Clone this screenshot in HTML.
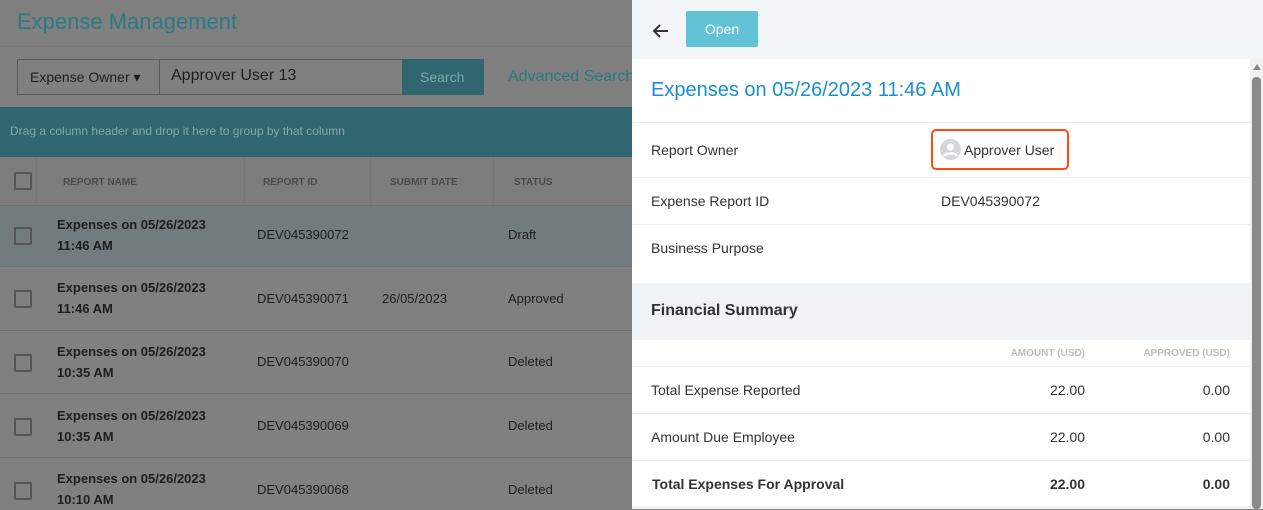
<!DOCTYPE html>
<html><head><style>
*{box-sizing:border-box;margin:0;padding:0}
body{width:1263px;height:509px;overflow:hidden;font-family:"Liberation Sans",sans-serif;background:#808080;position:relative}
.a{position:absolute}
.left{left:0;top:0;width:632px;height:509px;background:#808080}
.cb{position:absolute;width:18px;height:18px;border:2px solid #555;border-radius:2px;left:14px}
.hd{font-size:10px;font-weight:bold;color:#4a4a4a;position:absolute;top:177px}
.rn{position:absolute;left:57px;font-size:13px;font-weight:bold;color:#1e1e1e;line-height:21px}
.ri{position:absolute;left:257px;font-size:13px;color:#1e1e1e}
.rl{position:absolute;left:0;width:632px;height:1px;background:#707070}
.right{left:632px;top:0;width:631px;height:509px;background:#fff}
.lab{position:absolute;left:651px;font-size:14px;color:#333}
.hl{position:absolute;left:632px;width:618px;height:1px;background:#eceff2}
.num{position:absolute;font-size:14px;color:#333;text-align:right;width:100px}
</style></head><body>
<div class="a left">
 <div class="a" style="left:17px;top:9px;font-size:22px;color:#2a7a85">Expense Management</div>
 <div class="a" style="left:0;top:46px;width:632px;height:1px;background:#7a7a7a"></div>
 <div class="a" style="left:17px;top:59px;width:467px;height:36px;border:1px solid #5a5a5a;background:#808080"></div>
 <div class="a" style="left:30px;top:69px;font-size:14px;color:#1e1e1e">Expense Owner ▾</div>
 <div class="a" style="left:159px;top:60px;width:1px;height:34px;background:#5a5a5a"></div>
 <div class="a" style="left:171px;top:67px;font-size:16px;color:#1e1e1e">Approver User 13</div>
 <div class="a" style="left:402px;top:59px;width:82px;height:36px;background:#2f6670;border-radius:0 2px 2px 0"></div>
 <div class="a" style="left:420px;top:69px;font-size:14px;color:#7fa9ae">Search</div>
 <div class="a" style="left:508px;top:68px;font-size:16px;color:#2a7a85;white-space:nowrap">Advanced Search</div>
 <div class="a" style="left:0;top:107px;width:632px;height:50px;background:#2f6670"></div>
 <div class="a" style="left:10px;top:124px;font-size:12px;color:#86a7ab">Drag a column header and drop it here to group by that column</div>
 <div class="a" style="left:0;top:157px;width:632px;height:49px;background:#7d7d7d"></div>
 <div class="cb" style="top:172px"></div>
 <div class="hd" style="left:63px">REPORT NAME</div>
 <div class="hd" style="left:263px">REPORT ID</div>
 <div class="hd" style="left:390px">SUBMIT DATE</div>
 <div class="hd" style="left:514px">STATUS</div>
 <div class="a" style="left:244px;top:157px;width:1px;height:49px;background:#757575"></div>
 <div class="a" style="left:370px;top:157px;width:1px;height:49px;background:#757575"></div>
 <div class="a" style="left:493px;top:157px;width:1px;height:49px;background:#757575"></div>
 <div class="a" style="left:36px;top:157px;width:1px;height:49px;background:#757575"></div>
 <div class="a" style="left:0;top:206px;width:632px;height:60px;background:#727c7e"></div>
 <div class="rl" style="top:205px"></div><div class="rl" style="top:266px"></div><div class="rl" style="top:330px"></div><div class="rl" style="top:393px"></div><div class="rl" style="top:457px"></div>
 <div class="cb" style="top:227px"></div><div class="rn" style="top:214px">Expenses on 05/26/2023<br>11:46 AM</div><div class="ri" style="top:227px">DEV045390072</div><div class="ri" style="left:508px;top:227px">Draft</div>
 <div class="cb" style="top:290px"></div><div class="rn" style="top:277px">Expenses on 05/26/2023<br>11:46 AM</div><div class="ri" style="top:291px">DEV045390071</div><div class="ri" style="left:382px;top:291px">26/05/2023</div><div class="ri" style="left:508px;top:291px">Approved</div>
 <div class="cb" style="top:354px"></div><div class="rn" style="top:341px">Expenses on 05/26/2023<br>10:35 AM</div><div class="ri" style="top:354px">DEV045390070</div><div class="ri" style="left:508px;top:354px">Deleted</div>
 <div class="cb" style="top:418px"></div><div class="rn" style="top:405px">Expenses on 05/26/2023<br>10:35 AM</div><div class="ri" style="top:418px">DEV045390069</div><div class="ri" style="left:508px;top:418px">Deleted</div>
 <div class="cb" style="top:482px"></div><div class="rn" style="top:468px">Expenses on 05/26/2023<br>10:10 AM</div><div class="ri" style="top:482px">DEV045390068</div><div class="ri" style="left:508px;top:482px">Deleted</div>
</div>
<div class="a right"></div>
<div class="a" style="left:632px;top:0;width:631px;height:59px;background:#f3f6f9"></div>
<svg class="a" style="left:651px;top:21px" width="20" height="20" viewBox="0 0 20 20"><path d="M17 10H3M9 4L3 10L9 16" stroke="#333" stroke-width="2" fill="none"/></svg>
<div class="a" style="left:686px;top:11px;width:72px;height:36px;background:#62c3d6;border-radius:2px;color:#fff;font-size:14px;text-align:center;line-height:36px">Open</div>
<div class="a" style="left:1250px;top:59px;width:13px;height:450px;background:#f1f1f1"></div>
<div class="a" style="left:1253px;top:64px;width:0;height:0;border-left:4px solid transparent;border-right:4px solid transparent;border-bottom:6px solid #888"></div>
<div class="a" style="left:1252px;top:77px;width:9px;height:432px;background:#8a8a8a;border-radius:4px"></div>
<div class="a" style="left:651px;top:79px;font-size:20px;color:#1a8fd0">Expenses on 05/26/2023 11:46 AM</div>
<div class="hl" style="top:122px"></div>
<div class="lab" style="top:142px">Report Owner</div>
<div class="a" style="left:931px;top:129px;width:138px;height:41px;border:2px solid #ff4a10;border-radius:5px"></div>
<svg class="a" style="left:940px;top:139px" width="21" height="21" viewBox="0 0 21 21"><circle cx="10.5" cy="10.5" r="10.5" fill="#d3d6da"/><circle cx="10.5" cy="8" r="3.6" fill="#fff"/><path d="M4 17c1.5-3.5 11.5-3.5 13 0" stroke="#fff" stroke-width="2.6" fill="none"/></svg>
<div class="a" style="left:964px;top:142px;font-size:14px;color:#333">Approver User</div>
<div class="hl" style="top:177px"></div>
<div class="lab" style="top:193px">Expense Report ID</div>
<div class="a" style="left:941px;top:193px;font-size:14px;color:#333">DEV045390072</div>
<div class="hl" style="top:224px"></div>
<div class="lab" style="top:240px">Business Purpose</div>
<div class="a" style="left:632px;top:283px;width:618px;height:57px;background:#eff3f6"></div>
<div class="a" style="left:651px;top:302px;font-size:16px;font-weight:bold;color:#333">Financial Summary</div>
<div class="num" style="left:985px;top:348px;font-size:10px;font-weight:bold;color:#bdbdbd">AMOUNT (USD)</div>
<div class="num" style="left:1130px;top:348px;font-size:10px;font-weight:bold;color:#bdbdbd">APPROVED (USD)</div>
<div class="hl" style="top:366px"></div>
<div class="lab" style="top:382px">Total Expense Reported</div>
<div class="num" style="left:985px;top:382px">22.00</div><div class="num" style="left:1130px;top:382px">0.00</div>
<div class="hl" style="top:413px"></div>
<div class="lab" style="top:429px">Amount Due Employee</div>
<div class="num" style="left:985px;top:429px">22.00</div><div class="num" style="left:1130px;top:429px">0.00</div>
<div class="hl" style="top:460px"></div>
<div class="lab" style="top:476px;left:652px;font-weight:bold;font-size:14px">Total Expenses For Approval</div>
<div class="num" style="left:985px;top:476px;font-weight:bold;font-size:14px">22.00</div><div class="num" style="left:1130px;top:476px;font-weight:bold;font-size:14px">0.00</div>
<div class="hl" style="top:506px;height:3px;background:#eff3f6"></div>
</body></html>
